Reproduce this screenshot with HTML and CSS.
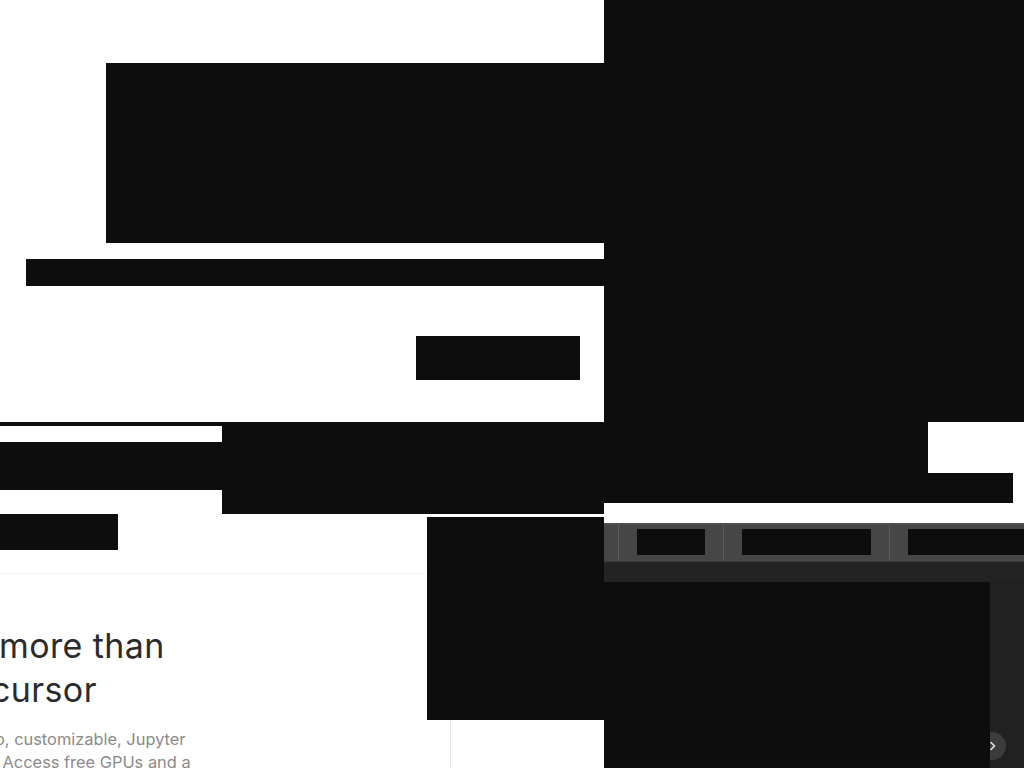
FILE: index.html
```html
<!DOCTYPE html>
<html lang="en">
<head>
<meta charset="utf-8">
<title>Notebook</title>
<link rel="stylesheet" href="styles.css">
</head>
<body>
<div class="page">
  <main class="left">
    <div class="redact r-title"></div>
    <div class="redact r-sub"></div>
    <div class="redact r-btn"></div>
    <div class="band">
      <div class="band-left">
        <div class="redact r-thin"></div>
        <div class="redact r-mid"></div>
      </div>
      <div class="redact r-band"></div>
    </div>
    <div class="lower">
      <div class="lower-main">
        <div class="redact r-tag"></div>
        <div class="divider"></div>
        <h2 class="heading"><span class="h1">more than</span><span class="h2">cursor</span></h2>
        <p class="lede"><span class="l1">o, customizable, Jupyter</span><span class="l2">a. Access free GPUs and a</span></p>
      </div>
      <div class="lower-side">
        <div class="redact r-card"></div>
        <div class="card-edge"></div>
      </div>
    </div>
  </main>
  <aside class="right">
    <div class="redact r-panel"></div>
    <div class="notch-row">
      <div class="redact r-notch"></div>
    </div>
    <div class="redact r-strip"></div>
    <div class="app">
      <div class="toolbar">
        <div class="tab tab-first"></div>
        <div class="tab"><div class="redact r-t1"></div></div>
        <div class="tab"><div class="redact r-t2"></div></div>
        <div class="tab"><div class="redact r-t3"></div></div>
      </div>
      <div class="subbar"></div>
      <div class="app-body">
        <div class="redact r-view"></div>
        <div class="side-strip">
          <button class="next" aria-label="Next">
            <svg width="8" height="10" viewBox="0 0 8 10"><path d="M2 1.5 L5.5 5 L2 8.5" fill="none" stroke="#e6e6e6" stroke-width="1.6" stroke-linecap="round" stroke-linejoin="round"/></svg>
          </button>
        </div>
      </div>
    </div>
  </aside>
</div>
</body>
</html>
```

FILE: styles.css
```css
* { box-sizing: border-box; }
html, body { margin: 0; padding: 0; background: #ffffff; }
body {
  font-family: Inter, "Noto Sans", "Liberation Sans", sans-serif;
  color: #222222;
  overflow: hidden;
}
.page {
  display: grid;
  grid-template-columns: 604px 420px;
  width: 1024px;
  height: 768px;
  overflow: hidden;
}
.redact { background: #0d0d0d; }

/* left column */
.left {
  display: flex;
  flex-direction: column;
  padding-top: 63px;
  min-width: 0;
}
.r-title { margin-left: 106px; height: 180px; }
.r-sub { margin-left: 26px; margin-top: 16px; height: 27px; }
.r-btn { margin-left: 416px; margin-top: 50px; width: 164px; height: 44px; }

.band {
  display: flex;
  margin-top: 42px;
  height: 92px;
}
.band-left {
  width: 222px;
  display: flex;
  flex-direction: column;
}
.r-thin { height: 4px; }
.r-mid { height: 48px; margin-top: 16px; }
.r-band { flex: 1; }

.lower {
  display: flex;
  flex: 1;
  min-height: 0;
}
.lower-main {
  width: 425px;
  display: flex;
  flex-direction: column;
  overflow: hidden;
}
.r-tag { width: 118px; height: 36px; }
.divider {
  margin-top: 23px;
  height: 1px;
  background: #f1f1f1;
}
.heading {
  margin: 50px 0 0 0;
  font-size: 34px;
  font-weight: 400;
  line-height: 44px;
  letter-spacing: 0.4px;
  color: #2b2b2b;
  white-space: nowrap;
}
.heading span { display: block; }
.h1 { margin-left: -1px; }
.h2 { margin-left: -9px; }
.lede {
  margin: 16px 0 0 0;
  font-size: 16.4px;
  line-height: 23px;
  color: #8a8a8a;
  white-space: nowrap;
}
.lede span { display: block; }
.l1 { margin-left: -5px; }
.l2 { margin-left: -16px; }

.lower-side {
  margin-left: 2px;
  width: 177px;
  display: flex;
  flex-direction: column;
}
.r-card { margin-top: 3px; height: 203px; }
.card-edge {
  flex: 1;
  margin-left: 23px;
  border-left: 1px solid #e6e6e6;
}

/* right column */
.right {
  display: flex;
  flex-direction: column;
  min-width: 0;
}
.r-panel { height: 422px; }
.notch-row { display: flex; height: 51px; }
.r-notch { width: 324px; }
.r-strip { width: 409px; height: 30px; }
.app {
  margin-top: 20px;
  flex: 1;
  display: flex;
  flex-direction: column;
  background: #222222;
  min-height: 0;
}
.toolbar {
  display: flex;
  height: 39px;
  background: #464646;
  border-top: 2px solid #4e4e4e;
  border-bottom: 1px solid #3a3a3a;
  overflow: hidden;
}
.tab {
  padding: 4px 18px 6px 18px;
  border-left: 1px solid #5e5e5e;
  flex: none;
}
.tab-first { width: 14px; padding: 0; border-left: none; }
.r-t1, .r-t2, .r-t3 { height: 26px; }
.r-t1 { width: 68px; }
.r-t2 { width: 129px; }
.r-t3 { width: 200px; }
.subbar {
  height: 20px;
  background: #232323;
}
.app-body {
  flex: 1;
  display: flex;
  min-height: 0;
}
.r-view {
  width: 386px;
  position: relative;
  z-index: 1;
}
.side-strip {
  flex: 1;
  position: relative;
  background: #212121;
}
.next {
  position: absolute;
  left: -12px;
  top: 150px;
  width: 28px;
  height: 28px;
  border-radius: 50%;
  border: none;
  padding: 0;
  background: #3c3c3c;
  display: flex;
  align-items: center;
  justify-content: center;
}
.next svg { display: block; margin-left: 1px; }
```
